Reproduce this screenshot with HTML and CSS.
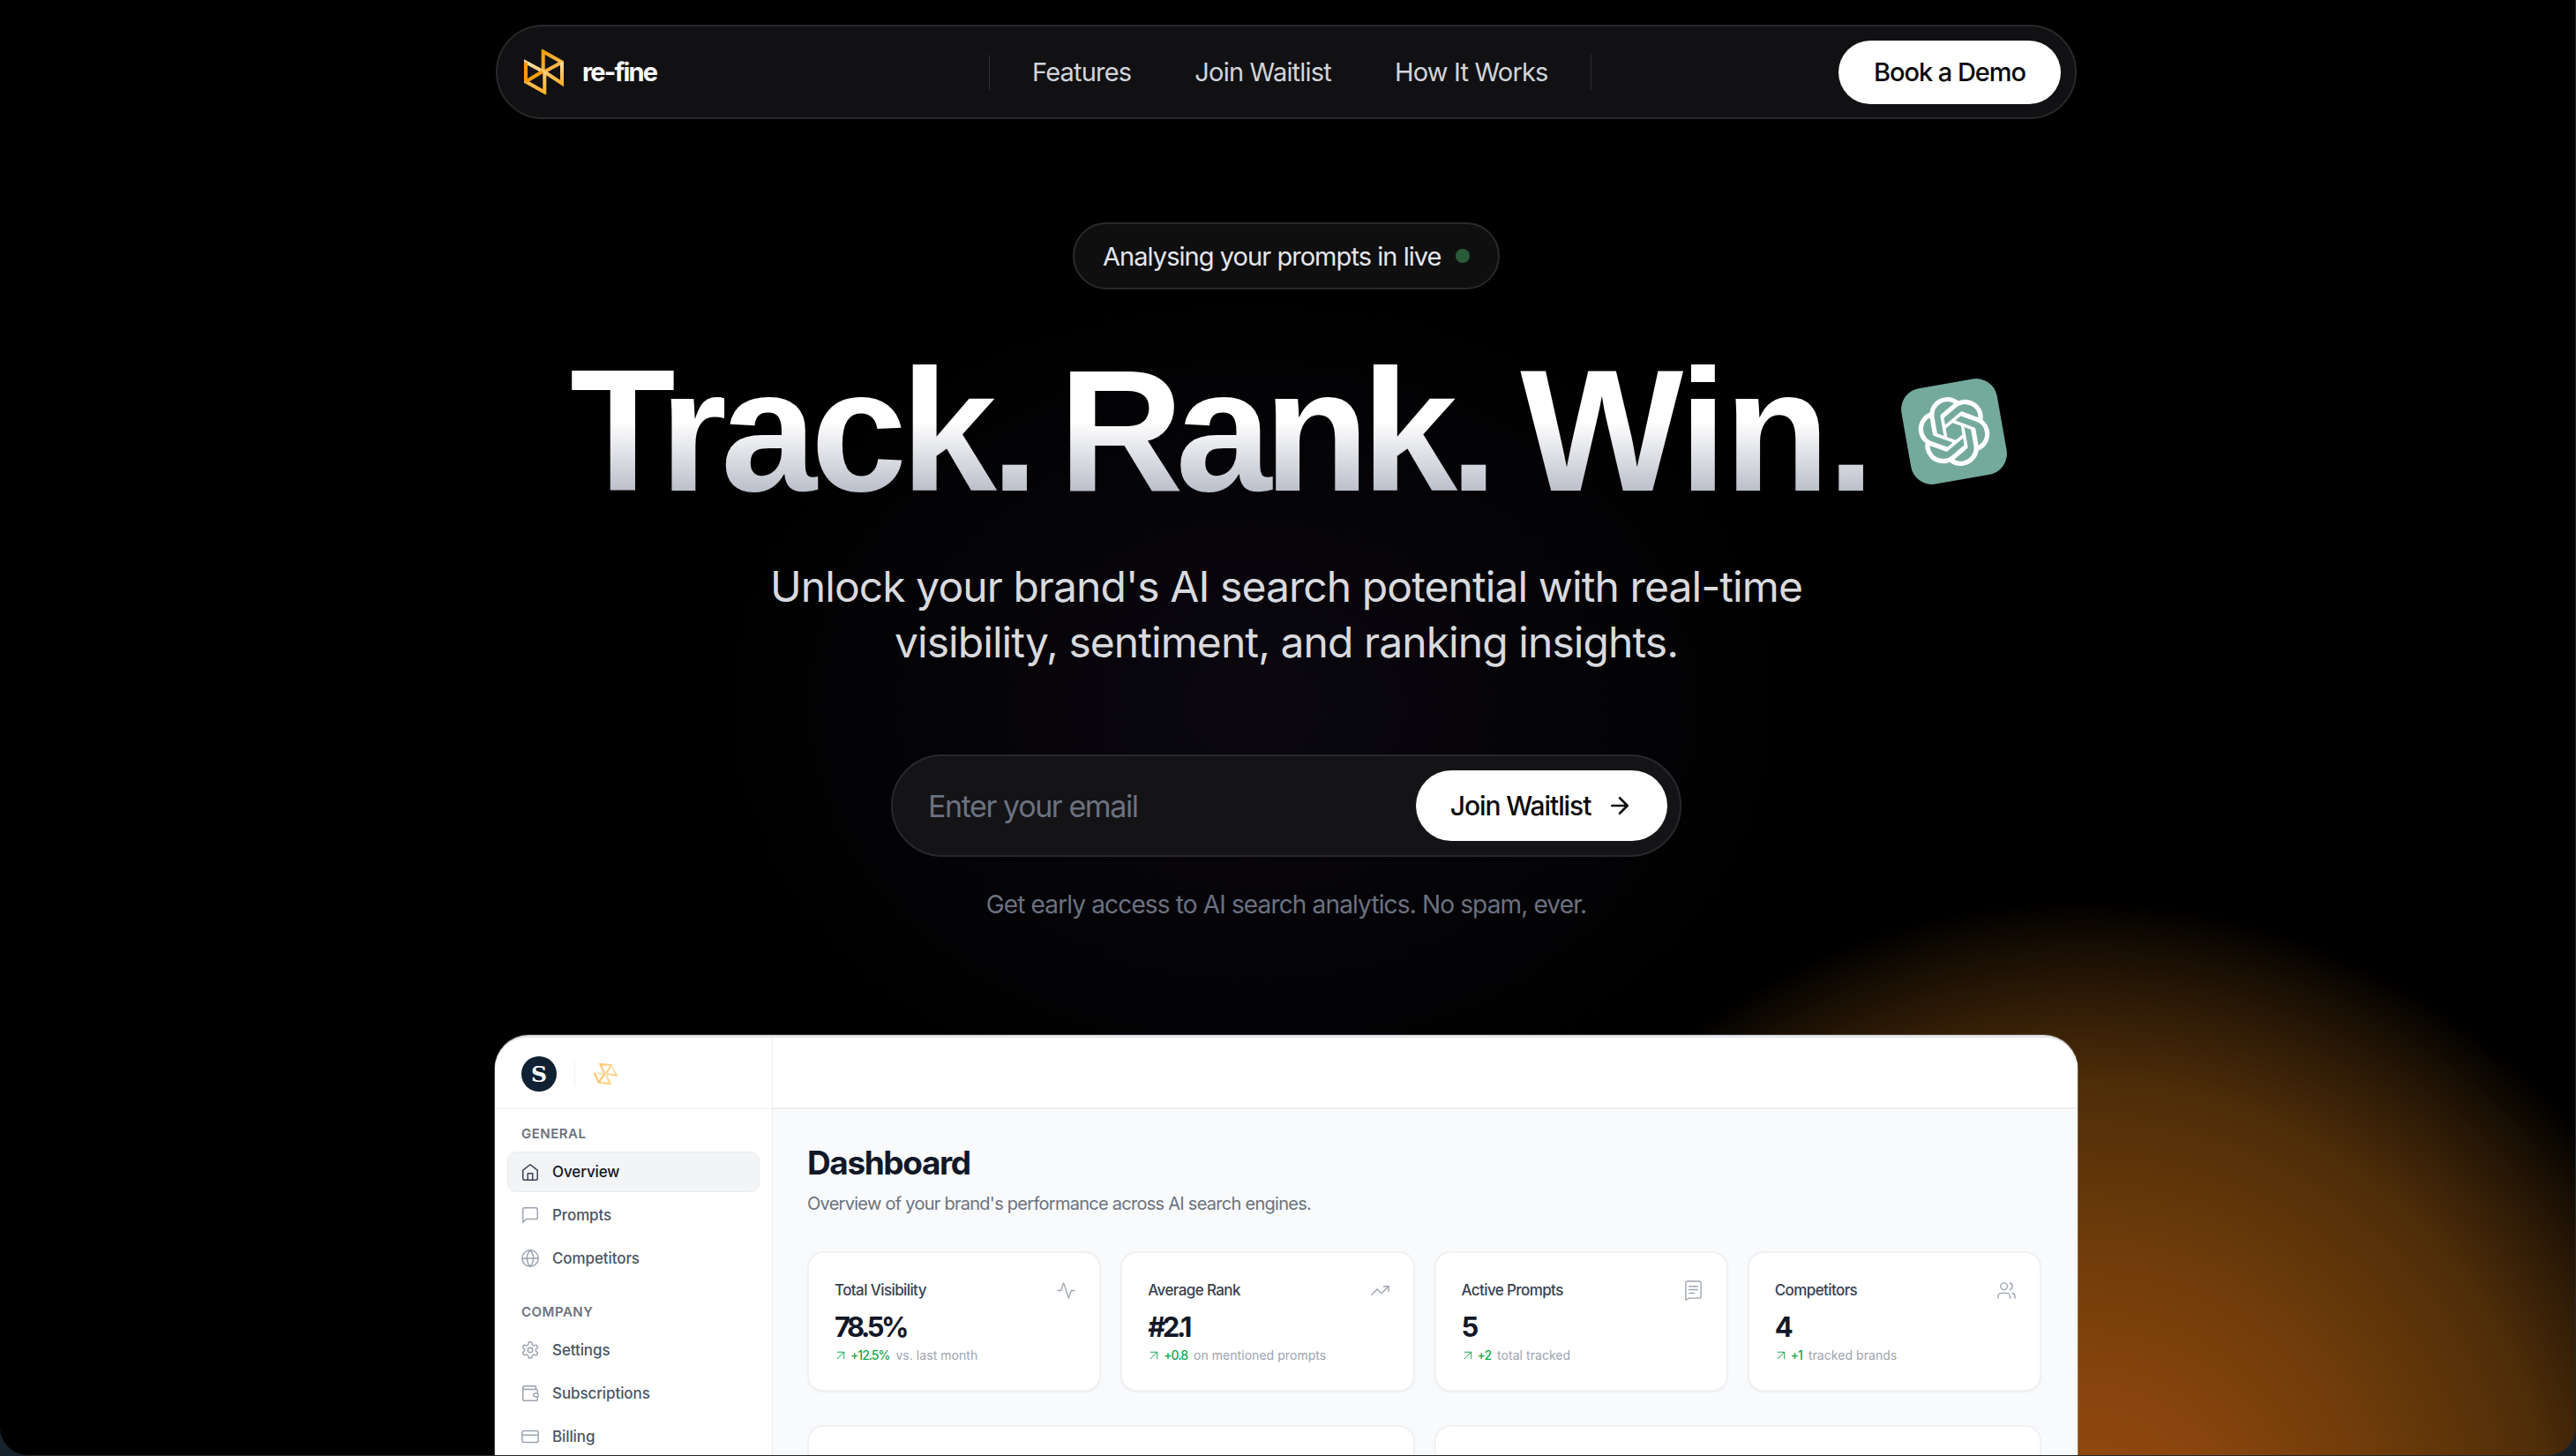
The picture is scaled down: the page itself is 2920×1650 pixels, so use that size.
FILE: index.html
```html
<!DOCTYPE html>
<html lang="en">
<head>
<meta charset="utf-8">
<title>re-fine</title>
<link rel="stylesheet" href="styles.css">
</head>
<body>
<svg class="defs" width="0" height="0" aria-hidden="true">
  <defs>
    <linearGradient id="lg-a" x1="0" y1="0" x2="1" y2="1"><stop offset="0" stop-color="#ff9f0f"/><stop offset="1" stop-color="#ffc25c"/></linearGradient>
    <linearGradient id="lg-b" x1="0" y1="0" x2="0" y2="1"><stop offset="0" stop-color="#ffdca3"/><stop offset="1" stop-color="#ffb02e"/></linearGradient>
    <symbol id="i-logo" viewBox="0 0 45 51">
      <path d="M21.7 23V2.5L43 14.5 21.7 26" fill="none" stroke="url(#lg-a)" stroke-width="4" stroke-linejoin="miter"/>
      <path d="M43 14.5V38.5L24 26" fill="none" stroke="url(#lg-b)" stroke-width="4" stroke-linejoin="miter"/>
      <path d="M2 14.5 23.3 26V48.5L2 36.5Z" fill="none" stroke="url(#lg-b)" stroke-width="4" stroke-linejoin="miter"/>
      <path d="M2 36.5 21 25" fill="none" stroke="#ff9f0f" stroke-width="4"/>
      <path d="M2 14.5V36.5" fill="none" stroke="#ff9a0a" stroke-width="4"/>
    </symbol>
    <symbol id="i-home" viewBox="0 0 24 24"><path d="M3 10 12 3l9 7v10a2 2 0 0 1-2 2H5a2 2 0 0 1-2-2z"/><path d="M9 22v-8h6v8"/></symbol>
    <symbol id="i-msg" viewBox="0 0 24 24"><path d="M21 15a2 2 0 0 1-2 2H7l-4 4V5a2 2 0 0 1 2-2h14a2 2 0 0 1 2 2z"/></symbol>
    <symbol id="i-globe" viewBox="0 0 24 24"><circle cx="12" cy="12" r="10"/><path d="M2 12h20"/><path d="M12 2a15.3 15.3 0 0 1 4 10 15.3 15.3 0 0 1-4 10 15.3 15.3 0 0 1-4-10 15.3 15.3 0 0 1 4-10z"/></symbol>
    <symbol id="i-gear" viewBox="0 0 24 24"><path d="M12.22 2h-.44a2 2 0 0 0-2 2v.18a2 2 0 0 1-1 1.73l-.43.25a2 2 0 0 1-2 0l-.15-.08a2 2 0 0 0-2.73.73l-.22.38a2 2 0 0 0 .73 2.73l.15.1a2 2 0 0 1 1 1.72v.51a2 2 0 0 1-1 1.74l-.15.09a2 2 0 0 0-.73 2.73l.22.38a2 2 0 0 0 2.73.73l.15-.08a2 2 0 0 1 2 0l.43.25a2 2 0 0 1 1 1.73V20a2 2 0 0 0 2 2h.44a2 2 0 0 0 2-2v-.18a2 2 0 0 1 1-1.73l.43-.25a2 2 0 0 1 2 0l.15.08a2 2 0 0 0 2.73-.73l.22-.39a2 2 0 0 0-.73-2.73l-.15-.08a2 2 0 0 1-1-1.74v-.5a2 2 0 0 1 1-1.74l.15-.09a2 2 0 0 0 .73-2.73l-.22-.38a2 2 0 0 0-2.73-.73l-.15.08a2 2 0 0 1-2 0l-.43-.25a2 2 0 0 1-1-1.73V4a2 2 0 0 0-2-2z"/><circle cx="12" cy="12" r="3"/></symbol>
    <symbol id="i-wallet" viewBox="0 0 24 24"><path d="M19 7V4a1 1 0 0 0-1-1H5a2 2 0 0 0 0 4h15a1 1 0 0 1 1 1v4h-3a2 2 0 0 0 0 4h3a1 1 0 0 0 1-1v-2a1 1 0 0 0-1-1"/><path d="M3 5v14a2 2 0 0 0 2 2h15a1 1 0 0 0 1-1v-4"/></symbol>
    <symbol id="i-card" viewBox="0 0 24 24"><rect x="2" y="5" width="20" height="14" rx="2"/><path d="M2 10h20"/></symbol>
    <symbol id="i-activity" viewBox="0 0 24 24"><path d="M22 12h-4l-3 9L9 3l-3 9H2"/></symbol>
    <symbol id="i-trend" viewBox="0 0 24 24"><path d="M22 7 13.5 15.5 8.5 10.5 2 17"/><path d="M16 7h6v6"/></symbol>
    <symbol id="i-msgtext" viewBox="0 0 24 24"><path d="M21 19a2 2 0 0 1-2 2H7l-4 2V3a2 2 0 0 1 2-2h14a2 2 0 0 1 2 2z"/><path d="M7 7h10M7 11h10M7 15h6"/></symbol>
    <symbol id="i-users" viewBox="0 0 24 24"><path d="M16 21v-2a4 4 0 0 0-4-4H6a4 4 0 0 0-4 4v2"/><circle cx="9" cy="7" r="4"/><path d="M22 21v-2a4 4 0 0 0-3-3.87"/><path d="M16 3.13a4 4 0 0 1 0 7.75"/></symbol>
    <symbol id="i-upright" viewBox="0 0 24 24"><path d="M7 7h10v10"/><path d="M7 17 17 7"/></symbol>
    <symbol id="i-right" viewBox="0 0 24 24"><path d="M5 12h14"/><path d="m12 5 7 7-7 7"/></symbol>
  </defs>
</svg>

<div class="frame">
  <header class="nav">
    <a class="brand">
      <svg class="brand-logo"><use href="#i-logo"/></svg>
      <span class="brand-name">re-fine</span>
    </a>
    <nav class="nav-links">
      <a>Features</a>
      <a>Join Waitlist</a>
      <a>How It Works</a>
    </nav>
    <a class="btn-demo">Book a Demo</a>
  </header>

  <main class="hero">
    <div class="badge">
      <span>Analysing your prompts in live</span>
      <i class="badge-dot"></i>
    </div>
    <div class="headline-row">
      <h1 class="headline">Track. <span class="word-rank">Rank.</span> <span class="word-win">Win.</span></h1>
      <div class="ai-tile">
        <svg viewBox="0 0 24 24" class="ai-mark"><path d="M22.2819 9.8211a5.9847 5.9847 0 0 0-.5157-4.9108 6.0462 6.0462 0 0 0-6.5098-2.9A6.0651 6.0651 0 0 0 4.9807 4.1818a5.9847 5.9847 0 0 0-3.9977 2.9 6.0462 6.0462 0 0 0 .7427 7.0966 5.98 5.98 0 0 0 .511 4.9107 6.051 6.051 0 0 0 6.5146 2.9001A5.9847 5.9847 0 0 0 13.2599 24a6.0557 6.0557 0 0 0 5.7718-4.2058 5.9894 5.9894 0 0 0 3.9977-2.9001 6.0557 6.0557 0 0 0-.7475-7.0729zm-9.022 12.6081a4.4755 4.4755 0 0 1-2.8764-1.0408l.1419-.0804 4.7783-2.7582a.7948.7948 0 0 0 .3927-.6813v-6.7369l2.02 1.1686a.071.071 0 0 1 .038.052v5.5826a4.504 4.504 0 0 1-4.4945 4.4944zm-9.6607-4.1254a4.4708 4.4708 0 0 1-.5346-3.0137l.142.0852 4.783 2.7582a.7712.7712 0 0 0 .7806 0l5.8428-3.3685v2.3324a.0804.0804 0 0 1-.0332.0615L9.74 19.9502a4.4992 4.4992 0 0 1-6.1408-1.6464zM2.3408 7.8956a4.485 4.485 0 0 1 2.3655-1.9728V11.6a.7664.7664 0 0 0 .3879.6765l5.8144 3.3543-2.0201 1.1685a.0757.0757 0 0 1-.071 0l-4.8303-2.7865A4.504 4.504 0 0 1 2.3408 7.872zm16.5963 3.8558L13.1038 8.364 15.1192 7.2a.0757.0757 0 0 1 .071 0l4.8303 2.7913a4.4944 4.4944 0 0 1-.6765 8.1042v-5.6772a.79.79 0 0 0-.407-.667zm2.0107-3.0231l-.142-.0852-4.7735-2.7818a.7759.7759 0 0 0-.7854 0L9.409 9.2297V6.8974a.0662.0662 0 0 1 .0284-.0615l4.8303-2.7866a4.4992 4.4992 0 0 1 6.6802 4.66zM8.3065 12.863l-2.02-1.1638a.0804.0804 0 0 1-.038-.0567V6.0742a4.4992 4.4992 0 0 1 7.3757-3.4537l-.142.0805L8.704 5.459a.7948.7948 0 0 0-.3927.6813zm1.0976-2.3654l2.602-1.4998 2.6069 1.4998v2.9994l-2.5974 1.4997-2.6067-1.4997Z"/></svg>
      </div>
    </div>
    <p class="subtitle">Unlock your brand's AI search potential with real-time<br>visibility, sentiment, and ranking insights.</p>
    <form class="signup">
      <span class="signup-placeholder">Enter your email</span>
      <a class="btn-join">Join Waitlist <svg class="btn-join-arrow"><use href="#i-right"/></svg></a>
    </form>
    <p class="fineprint">Get early access to AI search analytics. No spam, ever.</p>
  </main>

  <section class="app">
    <aside class="side">
      <div class="side-top">
        <span class="avatar">S</span>
        <i class="side-rule"></i>
        <svg class="side-logo"><use href="#i-logo"/></svg>
      </div>
      <div class="side-body">
        <div class="side-label">GENERAL</div>
        <a class="side-item is-active"><svg class="ico"><use href="#i-home"/></svg>Overview</a>
        <a class="side-item"><svg class="ico"><use href="#i-msg"/></svg>Prompts</a>
        <a class="side-item"><svg class="ico"><use href="#i-globe"/></svg>Competitors</a>
        <div class="side-label side-label-2">COMPANY</div>
        <a class="side-item"><svg class="ico"><use href="#i-gear"/></svg>Settings</a>
        <a class="side-item"><svg class="ico"><use href="#i-wallet"/></svg>Subscriptions</a>
        <a class="side-item"><svg class="ico"><use href="#i-card"/></svg>Billing</a>
      </div>
    </aside>
    <div class="panel">
      <div class="panel-top"></div>
      <div class="panel-body">
        <h2 class="panel-title">Dashboard</h2>
        <p class="panel-sub">Overview of your brand's performance across AI search engines.</p>
        <div class="stats">
          <article class="stat">
            <div class="stat-head"><span>Total Visibility</span><svg class="stat-ico"><use href="#i-activity"/></svg></div>
            <div class="stat-value">78.5%</div>
            <div class="stat-foot"><svg class="stat-up"><use href="#i-upright"/></svg><b>+12.5%</b> vs. last month</div>
          </article>
          <article class="stat">
            <div class="stat-head"><span>Average Rank</span><svg class="stat-ico"><use href="#i-trend"/></svg></div>
            <div class="stat-value">#2.1</div>
            <div class="stat-foot"><svg class="stat-up"><use href="#i-upright"/></svg><b>+0.8</b> on mentioned prompts</div>
          </article>
          <article class="stat">
            <div class="stat-head"><span>Active Prompts</span><svg class="stat-ico"><use href="#i-msgtext"/></svg></div>
            <div class="stat-value">5</div>
            <div class="stat-foot"><svg class="stat-up"><use href="#i-upright"/></svg><b>+2</b> total tracked</div>
          </article>
          <article class="stat">
            <div class="stat-head"><span>Competitors</span><svg class="stat-ico"><use href="#i-users"/></svg></div>
            <div class="stat-value">4</div>
            <div class="stat-foot"><svg class="stat-up"><use href="#i-upright"/></svg><b>+1</b> tracked brands</div>
          </article>
        </div>
        <div class="charts">
          <div class="chart"></div>
          <div class="chart"></div>
        </div>
      </div>
    </div>
  </section>
</div>
</body>
</html>
```
FILE: styles.css
```css
* { box-sizing: border-box; }
html, body { margin: 0; padding: 0; }
body {
  width: 2920px;
  height: 1650px;
  overflow: hidden;
  background: #16222c;
  font-family: "Inter", "Liberation Sans", sans-serif;
}
.defs { display: block; height: 0; }
a { color: inherit; text-decoration: none; }
h1, h2, p { margin: 0; }

.frame {
  width: 2920px;
  height: 1650px;
  padding: 28px 3px 0 0;
  overflow: hidden;
  display: flex;
  flex-direction: column;
  align-items: center;
  border-style: solid;
  border-color: #24282c;
  border-width: 0 1px 1px 0;
  border-radius: 0 0 32px 32px;
  background:
    radial-gradient(circle 740px at 2360px 1760px, #96490b 0%, #8a450e 23%, #6f3c0a 47%, #4e2d09 72%, #2d1a06 85%, #160d03 93%, rgba(0,0,0,0) 100%),
    radial-gradient(ellipse 620px 480px at 1420px 800px, rgba(20,14,30,.55) 0%, rgba(0,0,0,0) 100%),
    #000;
}

/* nav */
.nav {
  flex: none;
  width: 1792px;
  height: 107px;
  display: flex;
  align-items: center;
  padding: 0 16px 0 30px;
  border: 2px solid #29292c;
  border-radius: 54px;
  background: #111113;
}
.brand { display: flex; align-items: center; gap: 21px; width: 527px; }
.brand-logo { width: 45px; height: 51px; flex: none; }
.brand-name { font-size: 29px; font-weight: 700; letter-spacing: -1.8px; color: #fff; }
.nav-links {
  display: flex;
  align-items: center;
  gap: 72px;
  height: 40px;
  padding: 0 48px;
  border-left: 1px solid #2c2c2f;
  border-right: 1px solid #2c2c2f;
  font-size: 29px;
  letter-spacing: -.8px;
  color: #d1d5db;
}
.btn-demo {
  margin-left: auto;
  width: 252px;
  height: 72px;
  display: flex;
  align-items: center;
  justify-content: center;
  border-radius: 36px;
  background: #fff;
  color: #09090b;
  font-size: 29px;
  font-weight: 500;
  letter-spacing: -1.05px;
}

/* hero */
.hero { flex: none; display: flex; flex-direction: column; align-items: center; }
.badge {
  margin-top: 117px;
  width: 484px;
  height: 76px;
  display: flex;
  align-items: center;
  gap: 16px;
  padding: 0 32px;
  border: 2px solid #2a2a2c;
  border-radius: 38px;
  background: #0f0f10;
  font-size: 29px;
  letter-spacing: -.95px;
  color: #e5e7eb;
  white-space: nowrap;
}
.badge-dot { width: 16px; height: 16px; border-radius: 50%; background: #2a5b38; flex: none; }
.headline-row { margin-top: 61px; display: flex; align-items: center; height: 200px; }
.headline {
  font-family: "Liberation Sans", Arial, sans-serif;
  font-size: 196px;
  line-height: 200px;
  font-weight: 700;
  letter-spacing: -7px;
  word-spacing: -18px;
  white-space: nowrap;
  color: transparent;
  background: linear-gradient(180deg, #fff 0%, #fff 44%, #b6bac6 87%);
  -webkit-background-clip: text;
  background-clip: text;
}
.word-rank { letter-spacing: -9px; }
.word-win { letter-spacing: -3.25px; margin-left: 5px; }
.ai-tile {
  flex: none;
  margin-left: 38px;
  width: 110px;
  height: 110px;
  display: flex;
  align-items: center;
  justify-content: center;
  border-radius: 24px;
  background: #74aa9c;
  transform: rotate(-10deg);
}
.ai-mark { width: 80px; height: 80px; fill: #fff; }
.subtitle {
  margin-top: 44px;
  font-size: 48px;
  line-height: 63px;
  letter-spacing: -.93px;
  text-align: center;
  color: #d9dade;
}
.signup {
  margin-top: 96px;
  width: 896px;
  height: 116px;
  display: flex;
  align-items: center;
  padding: 0 14px 0 40px;
  border: 2px solid #29282b;
  border-radius: 58px;
  background: #141316;
}
.signup-placeholder { font-size: 34px; letter-spacing: -1.4px; color: #6b7280; }
.btn-join {
  margin-left: auto;
  width: 285px;
  height: 80px;
  display: flex;
  align-items: center;
  justify-content: center;
  gap: 18px;
  border-radius: 40px;
  background: #fff;
  color: #09090b;
  font-size: 30px;
  font-weight: 500;
  letter-spacing: -1.1px;
}
.btn-join-arrow { width: 30px; height: 30px; fill: none; stroke: #09090b; stroke-width: 2; stroke-linecap: round; stroke-linejoin: round; }
.fineprint { margin-top: 34px; font-size: 28px; letter-spacing: -.85px; line-height: 40px; color: #6b7280; }

/* app */
.app {
  flex: none;
  margin-top: 128px;
  width: 1794px;
  height: 700px;
  display: flex;
  border-radius: 38px 38px 0 0;
  background: #fff;
  border-top: 3px solid #e5e7eb;
  box-shadow: 0 0 0 1px rgba(255,255,255,.2);
  overflow: hidden;
}
.side { flex: none; width: 315px; border-right: 1px solid #eceef0; background: #fff; }
.side-top {
  height: 81px;
  display: flex;
  align-items: center;
  padding: 2px 0 0 30px;
  border-bottom: 1px solid #eceef0;
}
.avatar {
  width: 40px;
  height: 40px;
  display: flex;
  align-items: center;
  justify-content: center;
  border-radius: 50%;
  background: #0f2133;
  color: #fff;
  font-family: "DejaVu Serif", serif;
  font-size: 25px;
  font-weight: 700;
}
.side-rule { width: 1px; height: 28px; background: #eceef0; margin: 0 22px 0 20px; }
.side-logo { width: 24px; height: 28px; opacity: .6; transform: rotate(-25deg); }
.side-body { padding: 18px 14px; }
.side-label {
  height: 20px;
  line-height: 20px;
  padding-left: 16px;
  font-size: 15px;
  font-weight: 600;
  letter-spacing: .5px;
  color: #6b7280;
}
.side-label-2 { margin-top: 28px; margin-bottom: 6px; }
.side-label + .side-item { margin-top: 10px; }
.side-item {
  height: 46px;
  margin-bottom: 3px;
  display: flex;
  align-items: center;
  gap: 14px;
  padding-left: 14px;
  border: 1px solid transparent;
  border-radius: 10px;
  font-size: 17px;
  font-weight: 500;
  letter-spacing: -.1px;
  color: #4b5563;
}
.side-item.is-active { background: #f3f4f6; border-color: #ebecef; color: #111827; }
.ico { width: 22px; height: 22px; flex: none; fill: none; stroke: #9ca3af; stroke-width: 1.6; stroke-linecap: round; stroke-linejoin: round; }
.is-active .ico { stroke: #374151; }

.panel { flex: 1; min-width: 0; display: flex; flex-direction: column; background: #f9fafb; }
.panel-top { flex: none; height: 81px; background: #fff; border-bottom: 2px solid #eceef0; }
.panel-body { padding: 38px 41px 0 39px; }
.panel-title { font-size: 37px; line-height: 46px; font-weight: 700; letter-spacing: -1.4px; color: #111827; }
.panel-sub { margin-top: 9px; font-size: 20px; line-height: 28px; letter-spacing: -.73px; color: #6b7280; }
.stats { margin-top: 40px; display: grid; grid-template-columns: repeat(4, 1fr); gap: 22px; }
.stat {
  height: 159px;
  padding: 30px 26px 0 29px;
  border: 2px solid #f0f1f3;
  border-radius: 18px;
  background: #fff;
  box-shadow: 0 1px 2px rgba(0,0,0,.05);
}
.stat-head {
  display: flex;
  align-items: center;
  justify-content: space-between;
  height: 24px;
  font-size: 17px;
  font-weight: 500;
  letter-spacing: -.6px;
  color: #374151;
}
.stat-ico { width: 23px; height: 23px; fill: none; stroke: #9ca3af; stroke-width: 1.4; stroke-linecap: round; stroke-linejoin: round; }
.stat-value { margin-top: 11px; font-size: 31px; line-height: 38px; font-weight: 700; letter-spacing: -3.5px; color: #111827; }
.stat-foot {
  margin-top: 3px;
  display: flex;
  align-items: center;
  gap: 3px;
  font-size: 14px;
  line-height: 20px;
  letter-spacing: .05px;
  color: #9ca3af;
  white-space: pre;
}
.stat-foot b { font-weight: 500; letter-spacing: -1px; color: #16a34a; }
.stat-up { width: 18px; height: 18px; margin: 0 -1px 0 -2px; fill: none; stroke: #16a34a; stroke-width: 1.3; stroke-linecap: round; stroke-linejoin: round; }
.charts { margin-top: 38px; display: grid; grid-template-columns: repeat(2, 1fr); gap: 22px; }
.chart { height: 300px; border: 2px solid #f0f1f3; border-radius: 18px; background: #fff; }
```
